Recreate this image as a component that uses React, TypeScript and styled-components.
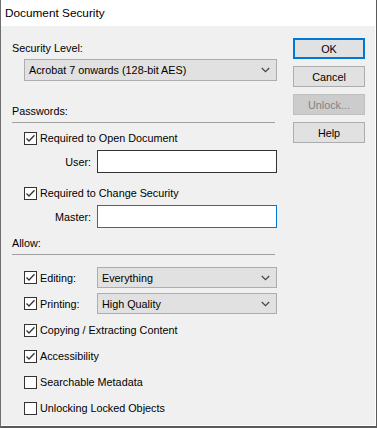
import React from "react";
import styled, { createGlobalStyle } from "styled-components";

const Global = createGlobalStyle`
  html, body { margin: 0; padding: 0; background: #f0f0f0; }
  body { font-family: "Liberation Sans", Arial, sans-serif; font-size: 10.8px; color: #000; }
  * { box-sizing: border-box; }
`;

const Window = styled.div`
  width: 377px;
  height: 428px;
  display: flex;
  flex-direction: column;
  border-left: 1px solid #6e6e6e;
  border-right: 1px solid #5a5a5a;
  border-bottom: 2px solid #5a5a5a;
  background: #f0f0f0;
  overflow: hidden;
`;

const TitleBar = styled.div`
  height: 26px;
  flex: none;
  background: #fff;
  display: flex;
  align-items: center;
  padding-left: 4px;
  font-size: 11.8px;
  line-height: 16px;
`;

const Body = styled.div`
  flex: 1;
  display: flex;
  align-items: flex-start;
  border-right: 1px solid #fff;
  border-bottom: 1px solid #fff;
`;

const Main = styled.div`
  width: 267px;
  margin-left: 11px;
  display: flex;
  flex-direction: column;
`;

const ButtonColumn = styled.div`
  width: 72px;
  margin-left: 14px;
  margin-top: 12px;
  display: flex;
  flex-direction: column;
  gap: 7px;
`;

const Label = styled.div<{ $top: number }>`
  margin-top: ${(p) => p.$top}px;
  line-height: 16px;
  height: 16px;
`;

const Separator = styled.div<{ $top: number }>`
  margin-top: ${(p) => p.$top}px;
  width: 263px;
  height: 1px;
  background: #a0a0a0;
`;

const SelectBox = styled.div<{ $width: number; $height: number }>`
  width: ${(p) => p.$width}px;
  height: ${(p) => p.$height}px;
  background: #e1e1e1;
  border: 1px solid #adadad;
  display: flex;
  align-items: center;
  justify-content: space-between;
  padding: 0 6px 0 4px;
  line-height: 16px;
  flex: none;
`;

const Chevron = () => (
  <svg width="9" height="6" viewBox="0 0 9 6">
    <polyline points="0.8,1 4.5,4.6 8.2,1" fill="none" stroke="#444" strokeWidth="1.2" />
  </svg>
);

const Indent = styled.div<{ $top: number }>`
  margin-top: ${(p) => p.$top}px;
  margin-left: 12px;
`;

const CheckRow = styled.label<{ $top: number }>`
  margin-top: ${(p) => p.$top}px;
  margin-left: 12px;
  height: 16px;
  display: flex;
  align-items: center;
  line-height: 16px;
`;

const Box = styled.span`
  width: 13px;
  height: 13px;
  border: 1px solid #333;
  background: #fff;
  display: inline-flex;
  align-items: center;
  justify-content: center;
  margin-right: 3px;
  flex: none;
`;

const CheckBox = ({ checked }: { checked: boolean }) => (
  <Box>
    {checked && (
      <svg width="11" height="11" viewBox="0 0 11 11">
        <polyline points="1.5,5.5 4,8 9.5,2.2" fill="none" stroke="#333" strokeWidth="1.3" />
      </svg>
    )}
  </Box>
);

const FieldRow = styled.div<{ $top: number }>`
  margin-top: ${(p) => p.$top}px;
  display: flex;
  align-items: center;
`;

const FieldLabel = styled.div`
  width: 79px;
  text-align: right;
  margin-right: 6px;
  line-height: 16px;
`;

const Input = styled.div<{ $focused?: boolean }>`
  width: 180px;
  height: 23px;
  background: #fff;
  border: 1px solid ${(p) => (p.$focused ? "#0078d7" : "#333")};
`;

const AllowRow = styled.div<{ $top: number }>`
  margin-top: ${(p) => p.$top}px;
  margin-left: 12px;
  display: flex;
  align-items: center;
  height: 21px;
`;

const AllowLabel = styled.div`
  width: 73px;
  flex: none;
  display: flex;
  align-items: center;
  line-height: 16px;
`;

const Button = styled.div<{ $variant?: "default" | "disabled" }>`
  height: 21px;
  display: flex;
  align-items: center;
  justify-content: center;
  line-height: 16px;
  background: ${(p) => (p.$variant === "disabled" ? "#cccccc" : "#e1e1e1")};
  color: ${(p) => (p.$variant === "disabled" ? "#838383" : "#000")};
  border: ${(p) =>
    p.$variant === "default"
      ? "2px solid #0078d7"
      : p.$variant === "disabled"
      ? "1px solid #bfbfbf"
      : "1px solid #adadad"};
`;

export default function App() {
  return (
    <>
      <Global />
      <Window>
        <TitleBar>Document Security</TitleBar>
        <Body>
          <Main>
            <Label $top={14}>Security Level:</Label>
            <Indent $top={3}>
              <SelectBox $width={253} $height={22}>
                <span>Acrobat 7 onwards (128-bit AES)</span>
                <Chevron />
              </SelectBox>
            </Indent>

            <Label $top={22}>Passwords:</Label>
            <Separator $top={3} />
            <CheckRow $top={7}>
              <CheckBox checked />
              Required to Open Document
            </CheckRow>
            <FieldRow $top={4}>
              <FieldLabel>User:</FieldLabel>
              <Input />
            </FieldRow>
            <CheckRow $top={12}>
              <CheckBox checked />
              Required to Change Security
            </CheckRow>
            <FieldRow $top={4}>
              <FieldLabel>Master:</FieldLabel>
              <Input $focused />
            </FieldRow>

            <Label $top={7}>Allow:</Label>
            <Separator $top={3} />
            <AllowRow $top={12}>
              <AllowLabel>
                <CheckBox checked />
                Editing:
              </AllowLabel>
              <SelectBox $width={180} $height={21}>
                <span>Everything</span>
                <Chevron />
              </SelectBox>
            </AllowRow>
            <AllowRow $top={5}>
              <AllowLabel>
                <CheckBox checked />
                Printing:
              </AllowLabel>
              <SelectBox $width={180} $height={21}>
                <span>High Quality</span>
                <Chevron />
              </SelectBox>
            </AllowRow>
            <CheckRow $top={8}>
              <CheckBox checked />
              Copying / Extracting Content
            </CheckRow>
            <CheckRow $top={10}>
              <CheckBox checked />
              Accessibility
            </CheckRow>
            <CheckRow $top={10}>
              <CheckBox checked={false} />
              Searchable Metadata
            </CheckRow>
            <CheckRow $top={10}>
              <CheckBox checked={false} />
              Unlocking Locked Objects
            </CheckRow>
          </Main>
          <ButtonColumn>
            <Button $variant="default">OK</Button>
            <Button>Cancel</Button>
            <Button $variant="disabled">Unlock...</Button>
            <Button>Help</Button>
          </ButtonColumn>
        </Body>
      </Window>
    </>
  );
}
